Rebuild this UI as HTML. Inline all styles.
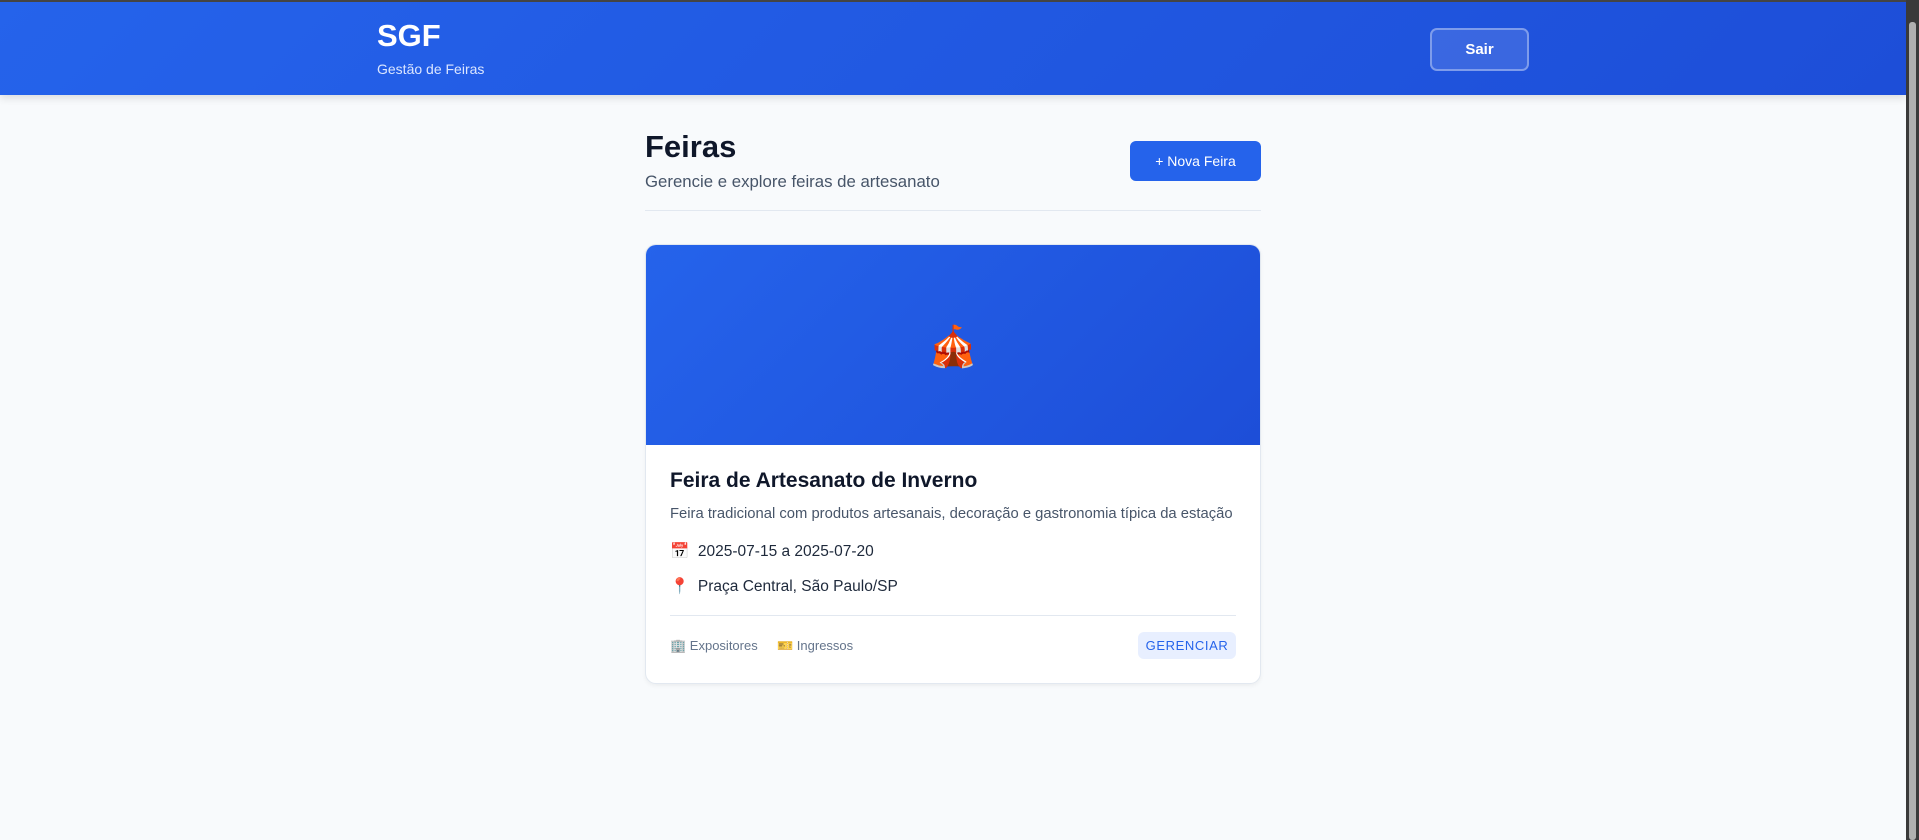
<!DOCTYPE html>
<html><head><meta charset="utf-8">
<style>
*{box-sizing:border-box;margin:0;padding:0}
body{width:1919px;height:840px;overflow:hidden;background:#f8fafc;font-family:"Liberation Sans","Noto Sans CJK SC",sans-serif;position:relative}
.hdr{position:absolute;left:0;top:0;width:1906px;height:95px;background:linear-gradient(135deg,#2563eb,#1d4ed8);box-shadow:0 3px 8px rgba(0,0,0,.12);border-top:2px solid #444}
.sgf{position:absolute;left:377px;top:16px;color:#fff;font-weight:bold;font-size:31px}
.sub{position:absolute;left:377px;top:59px;color:#dbe6ff;font-size:14px}
.sair{position:absolute;left:1430px;top:26px;width:99px;height:43px;border:2px solid rgba(255,255,255,.35);background:rgba(255,255,255,.12);border-radius:7px;color:#fff;font-weight:bold;font-size:15px;text-align:center;line-height:40px}
.sb{position:absolute;right:0;top:0;width:13px;height:840px;background:#3a3a3a}
.sb div{position:absolute;left:3px;top:22px;width:7px;height:818px;background:#b0b0b0;border-radius:3px}
h1{position:absolute;left:645px;top:129px;font-size:31px;color:#0f172a}
.g{position:absolute;left:645px;top:172px;font-size:16.8px;color:#475569}
.nb{position:absolute;left:1130px;top:141px;width:131px;height:40px;background:#2563eb;border-radius:6px;color:#fff;font-size:14px;text-align:center;line-height:40px}
.hr{position:absolute;left:645px;top:210px;width:616px;height:1px;background:#e2e8f0}
.card{position:absolute;left:645px;top:244px;width:616px;height:440px;background:#fff;border-radius:11px;border:1px solid #e2e8f0;box-shadow:0 2px 4px rgba(0,0,0,.05);overflow:hidden}
.ban{height:200px;background:linear-gradient(135deg,#2563eb,#1d4ed8);text-align:center;line-height:204px;font-size:40px}
.ct{position:absolute;left:24px;top:224px;font-size:21px;font-weight:bold;color:#0f172a}
.ds{position:absolute;left:24px;top:261px;font-size:14.8px;color:#475569}
.r{position:absolute;left:24px;font-size:15.5px;color:#1e293b}
.ln{position:absolute;left:24px;top:370px;width:566px;height:1px;background:#e2e8f0}
.ft{position:absolute;top:393px;font-size:13px;color:#64748b}
.ger{position:absolute;left:492px;top:387px;width:98px;height:27px;background:#e8efff;border-radius:6px;color:#2563eb;font-size:13px;text-align:center;line-height:27px;letter-spacing:.6px}
</style></head><body>
<div class="hdr"><div class="sgf">SGF</div><div class="sub">Gestão de Feiras</div><div class="sair">Sair</div></div>
<div class="sb"><div></div></div>
<h1>Feiras</h1>
<div class="g">Gerencie e explore feiras de artesanato</div>
<div class="nb">+ Nova Feira</div>
<div class="hr"></div>
<div class="card">
<div class="ban">🎪</div>
<div class="ct">Feira de Artesanato de Inverno</div>
<div class="ds">Feira tradicional com produtos artesanais, decoração e gastronomia típica da estação</div>
<div class="r" style="top:297px">📅&nbsp;&nbsp;2025-07-15 a 2025-07-20</div>
<div class="r" style="top:332px">📍&nbsp;&nbsp;Praça Central, São Paulo/SP</div>
<div class="ln"></div>
<div class="ft" style="left:24px">🏢 Expositores</div>
<div class="ft" style="left:131px">🎫 Ingressos</div>
<div class="ger">GERENCIAR</div>
</div>
</body></html>
